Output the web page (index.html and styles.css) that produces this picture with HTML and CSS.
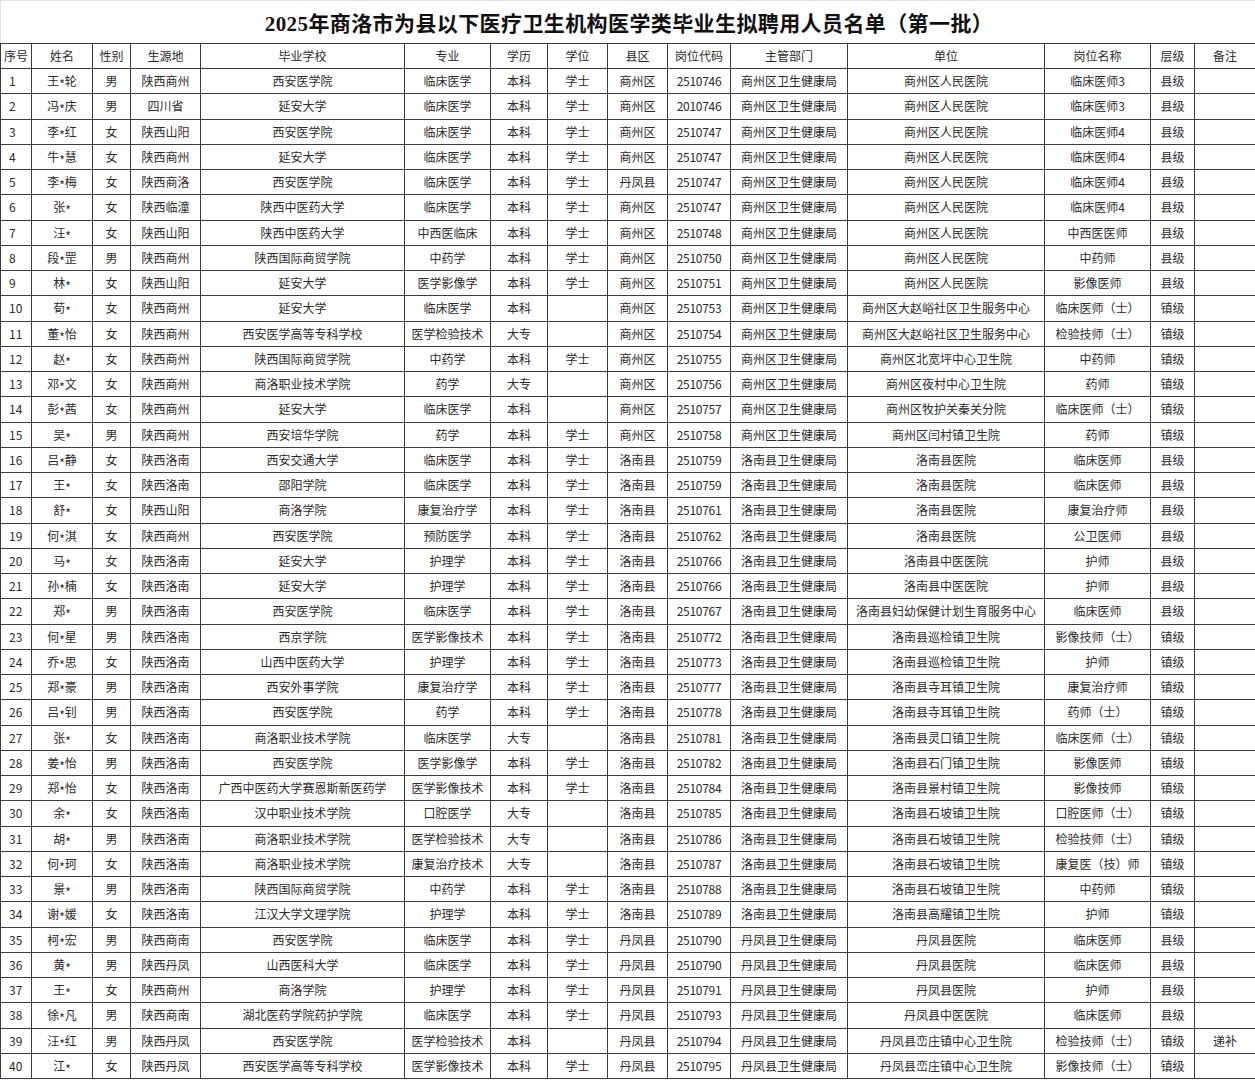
FILE: index.html
```html
<!DOCTYPE html>
<html lang="zh-CN">
<head>
<meta charset="utf-8">
<title>2025年商洛市为县以下医疗卫生机构医学类毕业生拟聘用人员名单（第一批）</title>
<link rel="stylesheet" href="styles.css">
</head>
<body>
<div class="sheet">
  <div class="title">2025年商洛市为县以下医疗卫生机构医学类毕业生拟聘用人员名单（第一批）</div>
  <table class="roster">
    <colgroup>
      <col class="c-no"><col class="c-name"><col class="c-sex"><col class="c-origin"><col class="c-school">
      <col class="c-major"><col class="c-edu"><col class="c-deg"><col class="c-county"><col class="c-code">
      <col class="c-dept"><col class="c-unit"><col class="c-post"><col class="c-level"><col class="c-note">
    </colgroup>
    <thead>
      <tr><th>序号</th><th>姓名</th><th>性别</th><th>生源地</th><th>毕业学校</th><th>专业</th><th>学历</th><th>学位</th><th>县区</th><th>岗位代码</th><th>主管部门</th><th>单位</th><th>岗位名称</th><th>层级</th><th>备注</th></tr>
    </thead>
    <tbody>
      <tr><td class="no">1</td><td>王<span class="mask">*</span>轮</td><td>男</td><td>陕西商州</td><td>西安医学院</td><td>临床医学</td><td>本科</td><td>学士</td><td>商州区</td><td class="code">2510746</td><td>商州区卫生健康局</td><td>商州区人民医院</td><td>临床医师3</td><td>县级</td><td></td></tr>
      <tr><td class="no">2</td><td>冯<span class="mask">*</span>庆</td><td>男</td><td>四川省</td><td>延安大学</td><td>临床医学</td><td>本科</td><td>学士</td><td>商州区</td><td class="code">2010746</td><td>商州区卫生健康局</td><td>商州区人民医院</td><td>临床医师3</td><td>县级</td><td></td></tr>
      <tr><td class="no">3</td><td>李<span class="mask">*</span>红</td><td>女</td><td>陕西山阳</td><td>西安医学院</td><td>临床医学</td><td>本科</td><td>学士</td><td>商州区</td><td class="code">2510747</td><td>商州区卫生健康局</td><td>商州区人民医院</td><td>临床医师4</td><td>县级</td><td></td></tr>
      <tr><td class="no">4</td><td>牛<span class="mask">*</span>慧</td><td>女</td><td>陕西商州</td><td>延安大学</td><td>临床医学</td><td>本科</td><td>学士</td><td>商州区</td><td class="code">2510747</td><td>商州区卫生健康局</td><td>商州区人民医院</td><td>临床医师4</td><td>县级</td><td></td></tr>
      <tr><td class="no">5</td><td>李<span class="mask">*</span>梅</td><td>女</td><td>陕西商洛</td><td>西安医学院</td><td>临床医学</td><td>本科</td><td>学士</td><td>丹凤县</td><td class="code">2510747</td><td>商州区卫生健康局</td><td>商州区人民医院</td><td>临床医师4</td><td>县级</td><td></td></tr>
      <tr><td class="no">6</td><td>张<span class="mask">*</span></td><td>女</td><td>陕西临潼</td><td>陕西中医药大学</td><td>临床医学</td><td>本科</td><td>学士</td><td>商州区</td><td class="code">2510747</td><td>商州区卫生健康局</td><td>商州区人民医院</td><td>临床医师4</td><td>县级</td><td></td></tr>
      <tr><td class="no">7</td><td>汪<span class="mask">*</span></td><td>女</td><td>陕西山阳</td><td>陕西中医药大学</td><td>中西医临床</td><td>本科</td><td>学士</td><td>商州区</td><td class="code">2510748</td><td>商州区卫生健康局</td><td>商州区人民医院</td><td>中西医医师</td><td>县级</td><td></td></tr>
      <tr><td class="no">8</td><td>段<span class="mask">*</span>罡</td><td>男</td><td>陕西商州</td><td>陕西国际商贸学院</td><td>中药学</td><td>本科</td><td>学士</td><td>商州区</td><td class="code">2510750</td><td>商州区卫生健康局</td><td>商州区人民医院</td><td>中药师</td><td>县级</td><td></td></tr>
      <tr><td class="no">9</td><td>林<span class="mask">*</span></td><td>女</td><td>陕西山阳</td><td>延安大学</td><td>医学影像学</td><td>本科</td><td>学士</td><td>商州区</td><td class="code">2510751</td><td>商州区卫生健康局</td><td>商州区人民医院</td><td>影像医师</td><td>县级</td><td></td></tr>
      <tr><td class="no">10</td><td>荀<span class="mask">*</span></td><td>女</td><td>陕西商州</td><td>延安大学</td><td>临床医学</td><td>本科</td><td></td><td>商州区</td><td class="code">2510753</td><td>商州区卫生健康局</td><td>商州区大赵峪社区卫生服务中心</td><td>临床医师（士）</td><td>镇级</td><td></td></tr>
      <tr><td class="no">11</td><td>董<span class="mask">*</span>怡</td><td>女</td><td>陕西商州</td><td>西安医学高等专科学校</td><td>医学检验技术</td><td>大专</td><td></td><td>商州区</td><td class="code">2510754</td><td>商州区卫生健康局</td><td>商州区大赵峪社区卫生服务中心</td><td>检验技师（士）</td><td>镇级</td><td></td></tr>
      <tr><td class="no">12</td><td>赵<span class="mask">*</span></td><td>女</td><td>陕西商州</td><td>陕西国际商贸学院</td><td>中药学</td><td>本科</td><td>学士</td><td>商州区</td><td class="code">2510755</td><td>商州区卫生健康局</td><td>商州区北宽坪中心卫生院</td><td>中药师</td><td>镇级</td><td></td></tr>
      <tr><td class="no">13</td><td>邓<span class="mask">*</span>文</td><td>女</td><td>陕西商州</td><td>商洛职业技术学院</td><td>药学</td><td>大专</td><td></td><td>商州区</td><td class="code">2510756</td><td>商州区卫生健康局</td><td>商州区夜村中心卫生院</td><td>药师</td><td>镇级</td><td></td></tr>
      <tr><td class="no">14</td><td>彭<span class="mask">*</span>茜</td><td>女</td><td>陕西商州</td><td>延安大学</td><td>临床医学</td><td>本科</td><td></td><td>商州区</td><td class="code">2510757</td><td>商州区卫生健康局</td><td>商州区牧护关秦关分院</td><td>临床医师（士）</td><td>镇级</td><td></td></tr>
      <tr><td class="no">15</td><td>吴<span class="mask">*</span></td><td>男</td><td>陕西商州</td><td>西安培华学院</td><td>药学</td><td>本科</td><td>学士</td><td>商州区</td><td class="code">2510758</td><td>商州区卫生健康局</td><td>商州区闫村镇卫生院</td><td>药师</td><td>镇级</td><td></td></tr>
      <tr><td class="no">16</td><td>吕<span class="mask">*</span>静</td><td>女</td><td>陕西洛南</td><td>西安交通大学</td><td>临床医学</td><td>本科</td><td>学士</td><td>洛南县</td><td class="code">2510759</td><td>洛南县卫生健康局</td><td>洛南县医院</td><td>临床医师</td><td>县级</td><td></td></tr>
      <tr><td class="no">17</td><td>王<span class="mask">*</span></td><td>女</td><td>陕西洛南</td><td>邵阳学院</td><td>临床医学</td><td>本科</td><td>学士</td><td>洛南县</td><td class="code">2510759</td><td>洛南县卫生健康局</td><td>洛南县医院</td><td>临床医师</td><td>县级</td><td></td></tr>
      <tr><td class="no">18</td><td>舒<span class="mask">*</span></td><td>女</td><td>陕西山阳</td><td>商洛学院</td><td>康复治疗学</td><td>本科</td><td>学士</td><td>洛南县</td><td class="code">2510761</td><td>洛南县卫生健康局</td><td>洛南县医院</td><td>康复治疗师</td><td>县级</td><td></td></tr>
      <tr><td class="no">19</td><td>何<span class="mask">*</span>淇</td><td>女</td><td>陕西商州</td><td>西安医学院</td><td>预防医学</td><td>本科</td><td>学士</td><td>洛南县</td><td class="code">2510762</td><td>洛南县卫生健康局</td><td>洛南县医院</td><td>公卫医师</td><td>县级</td><td></td></tr>
      <tr><td class="no">20</td><td>马<span class="mask">*</span></td><td>女</td><td>陕西洛南</td><td>延安大学</td><td>护理学</td><td>本科</td><td>学士</td><td>洛南县</td><td class="code">2510766</td><td>洛南县卫生健康局</td><td>洛南县中医医院</td><td>护师</td><td>县级</td><td></td></tr>
      <tr><td class="no">21</td><td>孙<span class="mask">*</span>楠</td><td>女</td><td>陕西洛南</td><td>延安大学</td><td>护理学</td><td>本科</td><td>学士</td><td>洛南县</td><td class="code">2510766</td><td>洛南县卫生健康局</td><td>洛南县中医医院</td><td>护师</td><td>县级</td><td></td></tr>
      <tr><td class="no">22</td><td>郑<span class="mask">*</span></td><td>男</td><td>陕西洛南</td><td>西安医学院</td><td>临床医学</td><td>本科</td><td>学士</td><td>洛南县</td><td class="code">2510767</td><td>洛南县卫生健康局</td><td>洛南县妇幼保健计划生育服务中心</td><td>临床医师</td><td>县级</td><td></td></tr>
      <tr><td class="no">23</td><td>何<span class="mask">*</span>星</td><td>男</td><td>陕西洛南</td><td>西京学院</td><td>医学影像技术</td><td>本科</td><td>学士</td><td>洛南县</td><td class="code">2510772</td><td>洛南县卫生健康局</td><td>洛南县巡检镇卫生院</td><td>影像技师（士）</td><td>镇级</td><td></td></tr>
      <tr><td class="no">24</td><td>乔<span class="mask">*</span>思</td><td>女</td><td>陕西洛南</td><td>山西中医药大学</td><td>护理学</td><td>本科</td><td>学士</td><td>洛南县</td><td class="code">2510773</td><td>洛南县卫生健康局</td><td>洛南县巡检镇卫生院</td><td>护师</td><td>镇级</td><td></td></tr>
      <tr><td class="no">25</td><td>郑<span class="mask">*</span>豪</td><td>男</td><td>陕西洛南</td><td>西安外事学院</td><td>康复治疗学</td><td>本科</td><td>学士</td><td>洛南县</td><td class="code">2510777</td><td>洛南县卫生健康局</td><td>洛南县寺耳镇卫生院</td><td>康复治疗师</td><td>镇级</td><td></td></tr>
      <tr><td class="no">26</td><td>吕<span class="mask">*</span>钊</td><td>男</td><td>陕西洛南</td><td>西安医学院</td><td>药学</td><td>本科</td><td>学士</td><td>洛南县</td><td class="code">2510778</td><td>洛南县卫生健康局</td><td>洛南县寺耳镇卫生院</td><td>药师（士）</td><td>镇级</td><td></td></tr>
      <tr><td class="no">27</td><td>张<span class="mask">*</span></td><td>女</td><td>陕西洛南</td><td>商洛职业技术学院</td><td>临床医学</td><td>大专</td><td></td><td>洛南县</td><td class="code">2510781</td><td>洛南县卫生健康局</td><td>洛南县灵口镇卫生院</td><td>临床医师（士）</td><td>镇级</td><td></td></tr>
      <tr><td class="no">28</td><td>姜<span class="mask">*</span>怡</td><td>男</td><td>陕西洛南</td><td>西安医学院</td><td>医学影像学</td><td>本科</td><td>学士</td><td>洛南县</td><td class="code">2510782</td><td>洛南县卫生健康局</td><td>洛南县石门镇卫生院</td><td>影像医师</td><td>镇级</td><td></td></tr>
      <tr><td class="no">29</td><td>郑<span class="mask">*</span>怡</td><td>女</td><td>陕西洛南</td><td>广西中医药大学赛恩斯新医药学</td><td>医学影像技术</td><td>本科</td><td>学士</td><td>洛南县</td><td class="code">2510784</td><td>洛南县卫生健康局</td><td>洛南县景村镇卫生院</td><td>影像技师</td><td>镇级</td><td></td></tr>
      <tr><td class="no">30</td><td>余<span class="mask">*</span></td><td>女</td><td>陕西洛南</td><td>汉中职业技术学院</td><td>口腔医学</td><td>大专</td><td></td><td>洛南县</td><td class="code">2510785</td><td>洛南县卫生健康局</td><td>洛南县石坡镇卫生院</td><td>口腔医师（士）</td><td>镇级</td><td></td></tr>
      <tr><td class="no">31</td><td>胡<span class="mask">*</span></td><td>男</td><td>陕西洛南</td><td>商洛职业技术学院</td><td>医学检验技术</td><td>大专</td><td></td><td>洛南县</td><td class="code">2510786</td><td>洛南县卫生健康局</td><td>洛南县石坡镇卫生院</td><td>检验技师（士）</td><td>镇级</td><td></td></tr>
      <tr><td class="no">32</td><td>何<span class="mask">*</span>珂</td><td>女</td><td>陕西洛南</td><td>商洛职业技术学院</td><td>康复治疗技术</td><td>大专</td><td></td><td>洛南县</td><td class="code">2510787</td><td>洛南县卫生健康局</td><td>洛南县石坡镇卫生院</td><td>康复医（技）师</td><td>镇级</td><td></td></tr>
      <tr><td class="no">33</td><td>景<span class="mask">*</span></td><td>男</td><td>陕西洛南</td><td>陕西国际商贸学院</td><td>中药学</td><td>本科</td><td>学士</td><td>洛南县</td><td class="code">2510788</td><td>洛南县卫生健康局</td><td>洛南县石坡镇卫生院</td><td>中药师</td><td>镇级</td><td></td></tr>
      <tr><td class="no">34</td><td>谢<span class="mask">*</span>媛</td><td>女</td><td>陕西洛南</td><td>江汉大学文理学院</td><td>护理学</td><td>本科</td><td>学士</td><td>洛南县</td><td class="code">2510789</td><td>洛南县卫生健康局</td><td>洛南县高耀镇卫生院</td><td>护师</td><td>镇级</td><td></td></tr>
      <tr><td class="no">35</td><td>柯<span class="mask">*</span>宏</td><td>男</td><td>陕西商南</td><td>西安医学院</td><td>临床医学</td><td>本科</td><td>学士</td><td>丹凤县</td><td class="code">2510790</td><td>丹凤县卫生健康局</td><td>丹凤县医院</td><td>临床医师</td><td>县级</td><td></td></tr>
      <tr><td class="no">36</td><td>黄<span class="mask">*</span></td><td>男</td><td>陕西丹凤</td><td>山西医科大学</td><td>临床医学</td><td>本科</td><td>学士</td><td>丹凤县</td><td class="code">2510790</td><td>丹凤县卫生健康局</td><td>丹凤县医院</td><td>临床医师</td><td>县级</td><td></td></tr>
      <tr><td class="no">37</td><td>王<span class="mask">*</span></td><td>女</td><td>陕西商州</td><td>商洛学院</td><td>护理学</td><td>本科</td><td>学士</td><td>丹凤县</td><td class="code">2510791</td><td>丹凤县卫生健康局</td><td>丹凤县医院</td><td>护师</td><td>县级</td><td></td></tr>
      <tr><td class="no">38</td><td>徐<span class="mask">*</span>凡</td><td>男</td><td>陕西商南</td><td>湖北医药学院药护学院</td><td>临床医学</td><td>本科</td><td>学士</td><td>丹凤县</td><td class="code">2510793</td><td>丹凤县卫生健康局</td><td>丹凤县中医医院</td><td>临床医师</td><td>县级</td><td></td></tr>
      <tr><td class="no">39</td><td>汪<span class="mask">*</span>红</td><td>男</td><td>陕西丹凤</td><td>西安医学院</td><td>医学检验技术</td><td>本科</td><td></td><td>丹凤县</td><td class="code">2510794</td><td>丹凤县卫生健康局</td><td>丹凤县峦庄镇中心卫生院</td><td>检验技师（士）</td><td>镇级</td><td>递补</td></tr>
      <tr><td class="no">40</td><td>江<span class="mask">*</span></td><td>女</td><td>陕西丹凤</td><td>西安医学高等专科学校</td><td>医学影像技术</td><td>本科</td><td>学士</td><td>丹凤县</td><td class="code">2510795</td><td>丹凤县卫生健康局</td><td>丹凤县峦庄镇中心卫生院</td><td>影像技师（士）</td><td>镇级</td><td></td></tr>
    </tbody>
  </table>
</div>
</body>
</html>
```

FILE: styles.css
```css
html, body {
  margin: 0;
  padding: 0;
  background: #ffffff;
}

.sheet {
  width: 1255px;
}

.title {
  box-sizing: border-box;
  height: 43px;
  border-top: 1px solid #e2e2e2;
  border-left: 1px solid #e2e2e2;
  display: flex;
  align-items: center;
  justify-content: center;
  padding-left: 2px;
  font-family: "Liberation Serif", "Noto Sans CJK SC", serif;
  font-weight: bold;
  font-size: 21px;
  color: #111111;
  letter-spacing: 0.4px;
}

.roster {
  border-collapse: collapse;
  table-layout: fixed;
  width: 1255px;
  font-family: "Noto Sans CJK SC", sans-serif;
  font-size: 12px;
  color: #2b2b2b;
}

.c-no { width: 31px; }
.c-name { width: 61px; }
.c-sex { width: 38px; }
.c-origin { width: 70px; }
.c-school { width: 204px; }
.c-major { width: 86px; }
.c-edu { width: 57px; }
.c-deg { width: 60px; }
.c-county { width: 60px; }
.c-code { width: 63px; }
.c-dept { width: 117px; }
.c-unit { width: 197px; }
.c-post { width: 106px; }
.c-level { width: 44px; }
.c-note { width: 61px; }

.roster th,
.roster td {
  border: 1px solid #3c3c3c;
  height: 24.25px;
  padding: 0;
  text-align: center;
  vertical-align: middle;
  white-space: nowrap;
  overflow: hidden;
  line-height: 14px;
  font-weight: normal;
}

.roster th {
  height: 24px;
}

.roster td.no {
  text-align: left;
  padding-left: 8px;
}

.roster td.code {
  letter-spacing: -0.3px;
}

.mask {
  position: relative;
  top: 3px;
}
```
